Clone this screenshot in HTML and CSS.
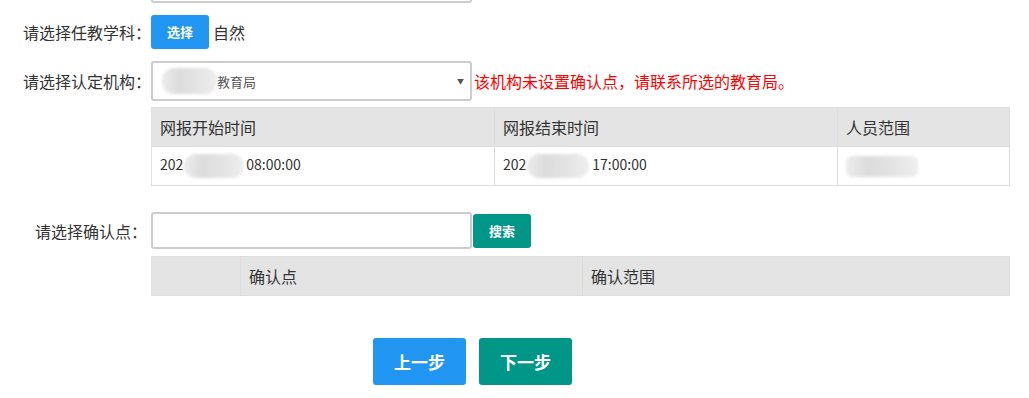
FILE: index.html
```html
<!DOCTYPE html>
<html lang="zh-CN">
<head>
    <meta charset="UTF-8">
    <meta name="viewport" content="width=device-width, initial-scale=1.0">
    <title>认定机构选择</title>
    <link rel="stylesheet" href="styles.css">
</head>
<body>

    <!-- bottom edge of the field above, cut off by the viewport -->
    <div class="prev-field"></div>

    <div class="form-row row-subject">
        <label class="label">请选择任教学科：</label>
        <button class="btn btn-small btn-blue">选择</button>
        <span class="subject-value">自然</span>
    </div>

    <div class="form-row row-org">
        <label class="label">请选择认定机构：</label>
        <div class="fake-select">
            <span class="blur blur-select"></span>
            <span class="select-text">教育局</span>
            <span class="select-arrow">▼</span>
        </div>
        <span class="warning">该机构未设置确认点，请联系所选的教育局。</span>
    </div>

    <table class="grid grid-time">
        <colgroup>
            <col style="width: 343px">
            <col style="width: 343px">
            <col>
        </colgroup>
        <tr>
            <th>网报开始时间</th>
            <th>网报结束时间</th>
            <th>人员范围</th>
        </tr>
        <tr>
            <td>202<span class="blur blur-date"></span>08:00:00</td>
            <td>202<span class="blur blur-date blur-date-2"></span>17:00:00</td>
            <td><span class="blur blur-range"></span></td>
        </tr>
    </table>

    <div class="form-row row-point">
        <label class="label label-short">请选择确认点：</label>
        <input type="text" class="text-input">
        <button class="btn btn-small btn-teal">搜索</button>
    </div>

    <table class="grid grid-point">
        <colgroup>
            <col style="width: 89px">
            <col style="width: 342px">
            <col>
        </colgroup>
        <tr>
            <th></th>
            <th>确认点</th>
            <th>确认范围</th>
        </tr>
    </table>

    <div class="step-buttons">
        <button class="btn btn-step btn-blue">上一步</button>
        <button class="btn btn-step btn-teal">下一步</button>
    </div>

</body>
</html>
```

FILE: styles.css
```css
/* General page styling */
body {
    margin: 0;
    font-family: "Noto Sans CJK SC", "Liberation Sans", sans-serif;
    color: #333333;
    background: #ffffff;
    text-spacing-trim: space-all;
}

/* Field above, only its bottom edge shows */
.prev-field {
    width: 321px;
    height: 3px;
    margin-left: 151px;
    box-sizing: border-box;
    border: 2px solid #cccccc;
    border-top: none;
    border-radius: 0 0 4px 4px;
}

/* Form rows */
.form-row {
    display: flex;
    align-items: center;
}

.label {
    width: 151px;
    flex-shrink: 0;
    text-align: right;
    font-size: 16px;
    box-sizing: border-box;
}

.label-short {
    padding-right: 4px;
}

.row-subject {
    margin-top: 12px;
    height: 33px;
}

.row-org {
    margin-top: 13px;
}

.row-point {
    margin-top: 26px;
}

.subject-value {
    margin-left: 4px;
    font-size: 16px;
}

/* Buttons */
.btn {
    border: none;
    color: #ffffff;
    font-family: inherit;
    font-weight: bold;
    border-radius: 3px;
    cursor: pointer;
    padding: 0;
}

.btn-small {
    width: 58px;
    height: 34px;
    font-size: 13px;
}

.btn-blue {
    background: #2196f3;
}

.btn-teal {
    background: #009688;
}

.row-point .btn-small {
    margin-left: 1px;
}

/* Select look-alike */
.fake-select {
    width: 321px;
    height: 40px;
    box-sizing: border-box;
    border: 2px solid #cccccc;
    border-radius: 3px;
    display: flex;
    align-items: center;
    padding-left: 9px;
    padding-right: 6px;
}

.select-text {
    font-size: 13px;
    color: #555555;
}

.select-arrow {
    margin-left: auto;
    font-size: 7px;
    color: #555555;
}

.warning {
    margin-left: 2px;
    font-size: 16px;
    color: #ff0000;
}

/* Blurred (masked) content */
.blur {
    display: inline-block;
    vertical-align: middle;
    border-radius: 12px;
    background: linear-gradient(90deg, #ececec 0%, #dcdcdc 30%, #e2e2e2 60%, #eeeeee 100%);
    filter: blur(1.5px);
}

.blur-select {
    width: 55px;
    height: 26px;
}

.blur-date {
    width: 60px;
    height: 24px;
    margin: 0 2px 0 1px;
}

.blur-date-2 {
    width: 62px;
    margin: 0 3px 0 1px;
}

.blur-range {
    width: 72px;
    height: 21px;
    border-radius: 6px;
}

/* Tables */
.grid {
    margin-left: 151px;
    width: 859px;
    border-collapse: collapse;
    table-layout: fixed;
}

.grid-time {
    margin-top: 6px;
}

.grid-point {
    margin-top: 7px;
}

.grid tr {
    height: 39px;
}

.grid th,
.grid td {
    border: 1px solid #dddddd;
    text-align: left;
    padding: 0 0 0 8px;
}

.grid th {
    background: #e4e4e4;
    font-size: 16px;
    font-weight: normal;
}

.grid td {
    font-size: 14px;
}

/* Input */
.text-input {
    width: 321px;
    height: 37px;
    box-sizing: border-box;
    border: 2px solid #cccccc;
    border-radius: 3px;
    padding: 0 8px;
    font-family: inherit;
}

/* Step buttons */
.step-buttons {
    margin-top: 42px;
    margin-left: 373px;
    display: flex;
    gap: 13px;
}

.btn-step {
    width: 93px;
    height: 47px;
    font-size: 17px;
}
```
